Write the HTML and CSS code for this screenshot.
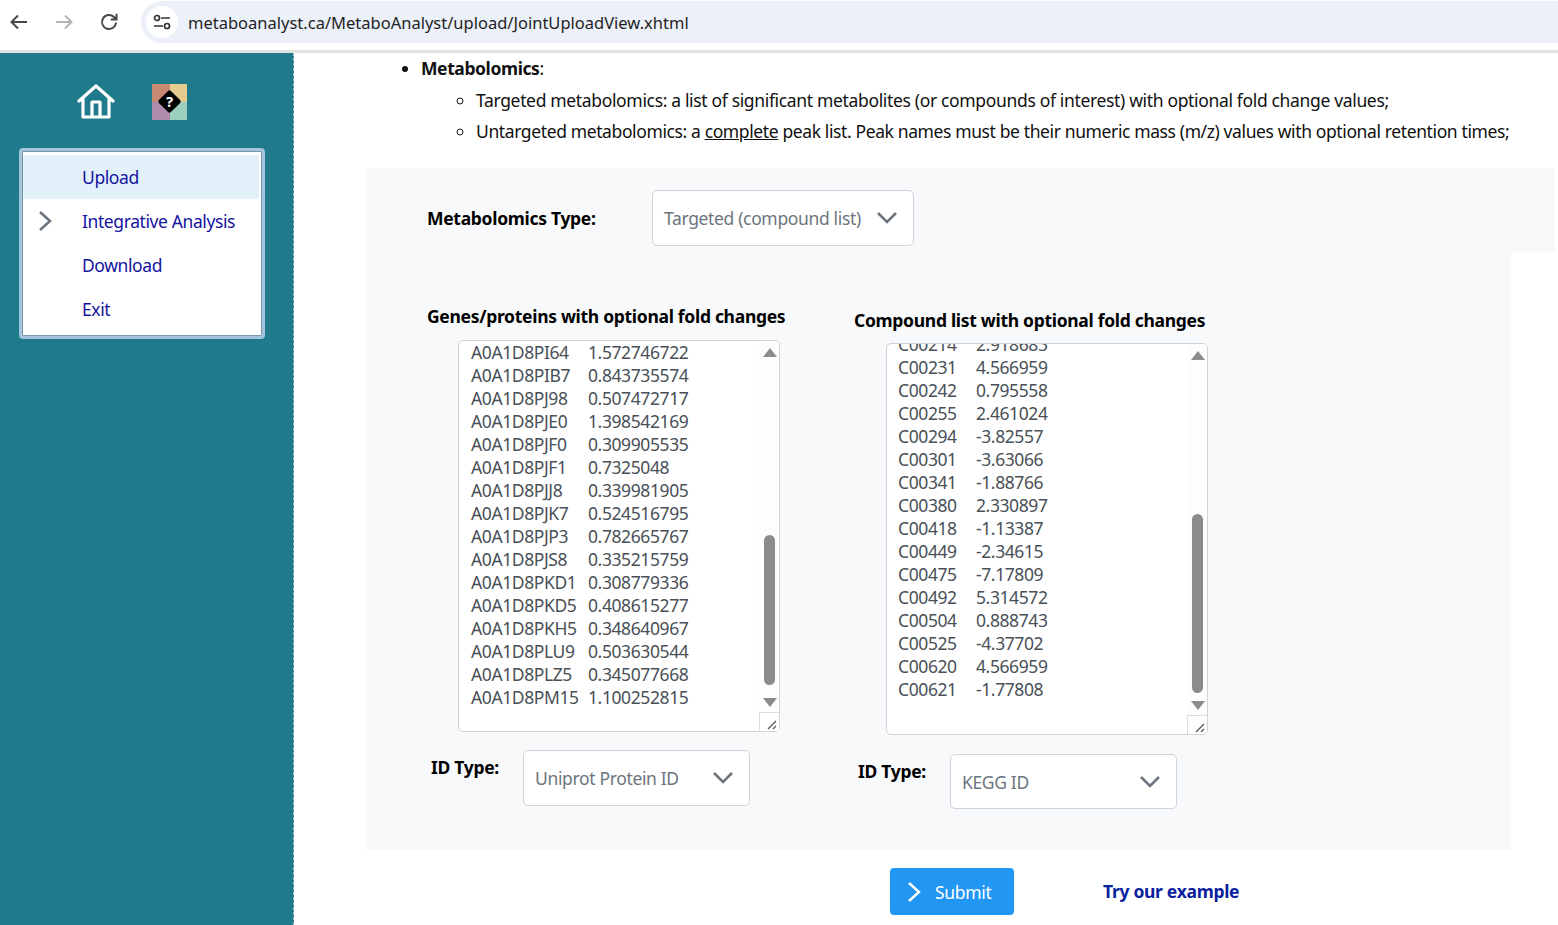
FILE: index.html
```html
<!DOCTYPE html>
<html>
<head>
<meta name="viewport" content="width=device-width, initial-scale=1">
<title>MetaboAnalyst - Joint Upload</title>
<link rel="stylesheet" href="styles.css">
</head>
<body>

<div class="browser-bar">
  <svg class="nav-icon" viewBox="0 0 24 24"><path d="M20 12H5M11 5.500L4.500 12l6.500 6.500" fill="none" stroke="#474747" stroke-width="2"/></svg>
  <svg class="nav-icon" viewBox="0 0 24 24"><path d="M4 12h15M13 5.500l6.500 6.500-6.500 6.500" fill="none" stroke="#b5b5b5" stroke-width="2"/></svg>
  <svg class="nav-icon" viewBox="0 0 24 24"><path d="M19 12.500A7 7 0 1 1 16.900 7L19 9M19.500 3.800V9.500h-5.700" fill="none" stroke="#474747" stroke-width="2"/></svg>
  <div class="address">
    <span class="site-info">
      <svg viewBox="0 0 20 20" width="20" height="20"><path d="M9 6h9M2 14h9" stroke="#333" stroke-width="1.700" fill="none"/><circle cx="5" cy="6" r="2.500" stroke="#333" stroke-width="1.700" fill="none"/><circle cx="15" cy="14" r="2.500" stroke="#333" stroke-width="1.700" fill="none"/></svg>
    </span>
    <span class="url">metaboanalyst.ca/MetaboAnalyst/upload/JointUploadView.xhtml</span>
  </div>
</div>

<div class="page">
  <div class="sidebar">
    <div class="side-icons">
      <svg class="home" viewBox="0 0 38 36"><path d="M2 17L19 2l17 15M6 15v18h26V15M15 33V18h8v15" fill="none" stroke="#fff" stroke-width="3.200" stroke-linejoin="round" stroke-linecap="round"/></svg>
      <div class="help">
        <span class="t1"></span><span class="t2"></span>
        <span class="t3"></span><span class="t4"></span>
        <span class="help-mark"><span>?</span></span>
      </div>
    </div>
    <div class="menu">
      <div class="menu-item selected">Upload</div>
      <div class="menu-item">
        <svg class="menu-arrow" viewBox="0 0 14 22"><path d="M2 2l10 9-10 9" fill="none" stroke="#6c757d" stroke-width="2.600"/></svg>
        Integrative Analysis
      </div>
      <div class="menu-item">Download</div>
      <div class="menu-item">Exit</div>
    </div>
  </div>

  <div class="content">
    <ul class="intro">
      <li><b>Metabolomics</b>:
        <ul>
          <li>Targeted metabolomics: a list of significant metabolites (or compounds of interest) with optional fold change values;</li>
          <li class="tight">Untargeted metabolomics: a <u>complete</u> peak list. Peak names must be their numeric mass (m/z) values with optional retention times;</li>
        </ul>
      </li>
    </ul>

    <div class="type-panel">
      <span class="label">Metabolomics Type:</span>
      <div class="select type-select">
        <span>Targeted (compound list)</span>
        <svg class="caret" viewBox="0 0 22 14"><path d="M2 2l9 9 9-9" fill="none" stroke="#6c757d" stroke-width="2.600"/></svg>
      </div>
    </div>

    <div class="form-panel">
      <div class="list-col">
        <h4 class="label">Genes/proteins with optional fold changes</h4>
        <div class="listbox">
          <div class="rows">
            <div><span>A0A1D8PI64</span>1.572746722</div>
            <div><span>A0A1D8PIB7</span>0.843735574</div>
            <div><span>A0A1D8PJ98</span>0.507472717</div>
            <div><span>A0A1D8PJE0</span>1.398542169</div>
            <div><span>A0A1D8PJF0</span>0.309905535</div>
            <div><span>A0A1D8PJF1</span>0.7325048</div>
            <div><span>A0A1D8PJJ8</span>0.339981905</div>
            <div><span>A0A1D8PJK7</span>0.524516795</div>
            <div><span>A0A1D8PJP3</span>0.782665767</div>
            <div><span>A0A1D8PJS8</span>0.335215759</div>
            <div><span>A0A1D8PKD1</span>0.308779336</div>
            <div><span>A0A1D8PKD5</span>0.408615277</div>
            <div><span>A0A1D8PKH5</span>0.348640967</div>
            <div><span>A0A1D8PLU9</span>0.503630544</div>
            <div><span>A0A1D8PLZ5</span>0.345077668</div>
            <div><span>A0A1D8PM15</span>1.100252815</div>
          </div>
          <div class="scrollbar">
            <i class="arrow-up"></i>
            <i class="thumb thumb-genes"></i>
            <i class="arrow-down"></i>
          </div>
          <div class="resizer"><svg viewBox="0 0 18 18"><path d="M8 16l8-8M13 16l3-3" stroke="#555" stroke-width="1.300"/></svg></div>
        </div>
        <div class="id-row">
          <span class="label id-label">ID Type:</span>
          <div class="select id-select">
            <span>Uniprot Protein ID</span>
            <svg class="caret" viewBox="0 0 22 14"><path d="M2 2l9 9 9-9" fill="none" stroke="#6c757d" stroke-width="2.600"/></svg>
          </div>
        </div>
      </div>

      <div class="list-col second">
        <h4 class="label">Compound list with optional fold changes</h4>
        <div class="listbox">
          <div class="rows compounds">
            <div><span>C00214</span>2.918683</div>
            <div><span>C00231</span>4.566959</div>
            <div><span>C00242</span>0.795558</div>
            <div><span>C00255</span>2.461024</div>
            <div><span>C00294</span>-3.82557</div>
            <div><span>C00301</span>-3.63066</div>
            <div><span>C00341</span>-1.88766</div>
            <div><span>C00380</span>2.330897</div>
            <div><span>C00418</span>-1.13387</div>
            <div><span>C00449</span>-2.34615</div>
            <div><span>C00475</span>-7.17809</div>
            <div><span>C00492</span>5.314572</div>
            <div><span>C00504</span>0.888743</div>
            <div><span>C00525</span>-4.37702</div>
            <div><span>C00620</span>4.566959</div>
            <div><span>C00621</span>-1.77808</div>
          </div>
          <div class="scrollbar">
            <i class="arrow-up"></i>
            <i class="thumb thumb-compounds"></i>
            <i class="arrow-down"></i>
          </div>
          <div class="resizer"><svg viewBox="0 0 18 18"><path d="M8 16l8-8M13 16l3-3" stroke="#555" stroke-width="1.300"/></svg></div>
        </div>
        <div class="id-row">
          <span class="label id-label">ID Type:</span>
          <div class="select id-select">
            <span>KEGG ID</span>
            <svg class="caret" viewBox="0 0 22 14"><path d="M2 2l9 9 9-9" fill="none" stroke="#6c757d" stroke-width="2.600"/></svg>
          </div>
        </div>
      </div>
    </div>

    <div class="actions">
      <div class="button">
        <svg viewBox="0 0 14 22" width="14" height="22"><path d="M2 2l10 9-10 9" fill="none" stroke="#fff" stroke-width="2.400"/></svg>
        <span>Submit</span>
      </div>
      <span class="try-link">Try our example</span>
    </div>
  </div>
</div>

</body>
</html>
```

FILE: styles.css
```css
html {
  box-sizing: border-box;
}

*, *:before, *:after {
  box-sizing: inherit;
}

body {
  font-family: "Noto Sans", "Open Sans", Arial, sans-serif;
  font-size: 17.5px;
  color: #111;
  margin: 0;
  height: 925px;
  overflow: hidden;
  background-color: white;
}

.browser-bar {
  height: 53px;
  display: flex;
  align-items: flex-start;
  padding: 1px 0 0 7px;
  border-bottom: 3px solid #e3e3e3;
}

.nav-icon {
  width: 24px;
  height: 24px;
  margin: 9px 21px 0 0;
}

.address {
  width: 1417px;
  height: 42px;
  margin-left: -1px;
  padding: 0 0 0 5px;
  display: flex;
  align-items: center;
  background-color: #ebf0f9;
  border-radius: 21px 0 0 21px;
}

.site-info {
  width: 32px;
  height: 32px;
  border-radius: 50%;
  background-color: white;
  display: flex;
  align-items: center;
  justify-content: center;
}

.url {
  margin-left: 10px;
  font-size: 16.500px;
  color: #1f1f1f;
}

.page {
  display: flex;
  height: 872px;
}

.sidebar {
  width: 294px;
  flex-shrink: 0;
  background-color: #1f7a8c;
  border-right: 1px dashed #9fc3cb;
  padding: 31px 0 0 19px;
}

.side-icons {
  display: flex;
  align-items: center;
  height: 36px;
  margin-bottom: 28px;
  padding-left: 58px;
}

.home {
  width: 38px;
  height: 36px;
}

.help {
  position: relative;
  width: 35px;
  height: 36px;
  margin-left: 37px;
  display: grid;
  grid-template-columns: 1fr 1fr;
}

.t1 { background-color: #c98a72; }
.t2 { background-color: #e6cb8e; }
.t3 { background-color: #ae8bab; }
.t4 { background-color: #9ccfbd; }

.help-mark {
  position: absolute;
  left: 9px;
  top: 9px;
  width: 17px;
  height: 17px;
  background-color: black;
  border-radius: 2px;
  transform: rotate(45deg);
  display: flex;
  align-items: center;
  justify-content: center;
}

.help-mark span {
  transform: rotate(-45deg);
  color: white;
  font-size: 15px;
  font-weight: bold;
  line-height: 1;
}

.menu {
  width: 246px;
  height: 191px;
  background-color: white;
  border: 3px solid #a3c4dc;
  border-radius: 4px;
  box-shadow: inset 0 0 0 1px #7a96ad;
  padding: 4px 3px 0 1px;
}

.menu-item {
  position: relative;
  height: 44px;
  line-height: 44px;
  padding-left: 59px;
  color: #14149e;
  letter-spacing: -0.4px;
}

.selected {
  background-color: #e3f1fb;
}

.menu-arrow {
  position: absolute;
  left: 15px;
  top: 11px;
  width: 14px;
  height: 22px;
}

.content {
  flex: 1;
  min-width: 0;
  padding-left: 72px;
}

.intro {
  margin: 0 0 21px 0;
  padding: 0 0 0 55px;
  line-height: 31px;
  white-space: nowrap;
  letter-spacing: -0.34px;
}

.intro ul {
  padding: 1px 0 0 55px;
  list-style-type: circle;
}

.intro .tight {
  letter-spacing: -0.385px;
}

.intro b {
  letter-spacing: -0.4px;
}

.type-panel {
  width: 1189px;
  height: 84px;
  display: flex;
  align-items: center;
  padding: 16px 0 0 62px;
  background-color: #f8f9fb;
}

.label {
  font-weight: bold;
  font-size: 17.5px;
  letter-spacing: -0.3px;
  color: black;
  margin: 0;
}

.type-panel .label {
  width: 225px;
  margin-left: -1px;
}

.select {
  display: flex;
  align-items: center;
  justify-content: space-between;
  background-color: white;
  border: 1px solid #ced4da;
  border-radius: 5px;
  color: #6c757d;
  padding: 0 15px 0 11px;
  letter-spacing: -0.35px;
}

.type-select {
  width: 262px;
  height: 56px;
}

.caret {
  width: 22px;
  height: 14px;
}

.form-panel {
  width: 1145px;
  height: 598px;
  padding: 52px 0 0 62px;
  display: flex;
  background-color: #f8f9fb;
}

.list-col {
  width: 427px;
}

.second {
  padding-top: 4px;
}

.list-col h4 {
  line-height: 24px;
  margin: 0 0 12px -1px;
  white-space: nowrap;
}

.listbox {
  position: relative;
  width: 322px;
  height: 392px;
  margin-left: 30px;
  background-color: white;
  border: 1px solid #ced4da;
  border-radius: 5px;
  overflow: hidden;
}

.second .listbox {
  margin-top: -1px;
  margin-left: 31px;
}

.rows {
  padding: 0 0 0 12px;
  line-height: 23px;
  color: #495057;
  letter-spacing: -0.4px;
  white-space: nowrap;
}

.rows span {
  display: inline-block;
  width: 117px;
}

.compounds {
  margin-top: -11px;
  padding-left: 11px;
}

.compounds span {
  width: 78px;
}

.scrollbar {
  position: absolute;
  right: 0;
  top: 0;
  bottom: 0;
  width: 20px;
  background-color: #fdfdfd;
}

.arrow-up, .arrow-down {
  position: absolute;
  left: 4px;
  border-left: 7px solid transparent;
  border-right: 7px solid transparent;
}

.arrow-up {
  top: 7px;
  border-bottom: 9px solid #8b8b8b;
}

.arrow-down {
  top: 357px;
  border-top: 9px solid #8b8b8b;
}

.thumb {
  position: absolute;
  left: 5px;
  width: 11px;
  background-color: #8b8b8b;
  border-radius: 6px;
}

.thumb-genes {
  top: 194px;
  height: 150px;
}

.thumb-compounds {
  top: 170px;
  height: 179px;
}

.resizer {
  position: absolute;
  right: 0;
  bottom: 0;
  width: 20px;
  height: 19px;
  background-color: white;
  border-top: 1px solid #ddd;
  border-left: 1px solid #ddd;
}

.resizer svg {
  display: block;
  width: 18px;
  height: 18px;
}

.id-row {
  display: flex;
  align-items: flex-start;
  margin: 18px 0 0 3px;
}

.second .id-row {
  margin-top: 19px;
}

.id-label {
  width: 92px;
  line-height: 34px;
}

.id-select {
  width: 227px;
  height: 56px;
}

.second .id-select {
  height: 55px;
}

.actions {
  display: flex;
  align-items: center;
  padding: 18px 0 0 524px;
}

.button {
  width: 124px;
  height: 47px;
  display: flex;
  align-items: center;
  gap: 14px;
  padding-left: 17px;
  background-color: #2196f3;
  color: white;
  border-radius: 4px;
  letter-spacing: -0.3px;
}

.try-link {
  margin: 0 0 2px 89px;
  font-weight: bold;
  color: #0a1f9e;
  letter-spacing: -0.3px;
}
```
